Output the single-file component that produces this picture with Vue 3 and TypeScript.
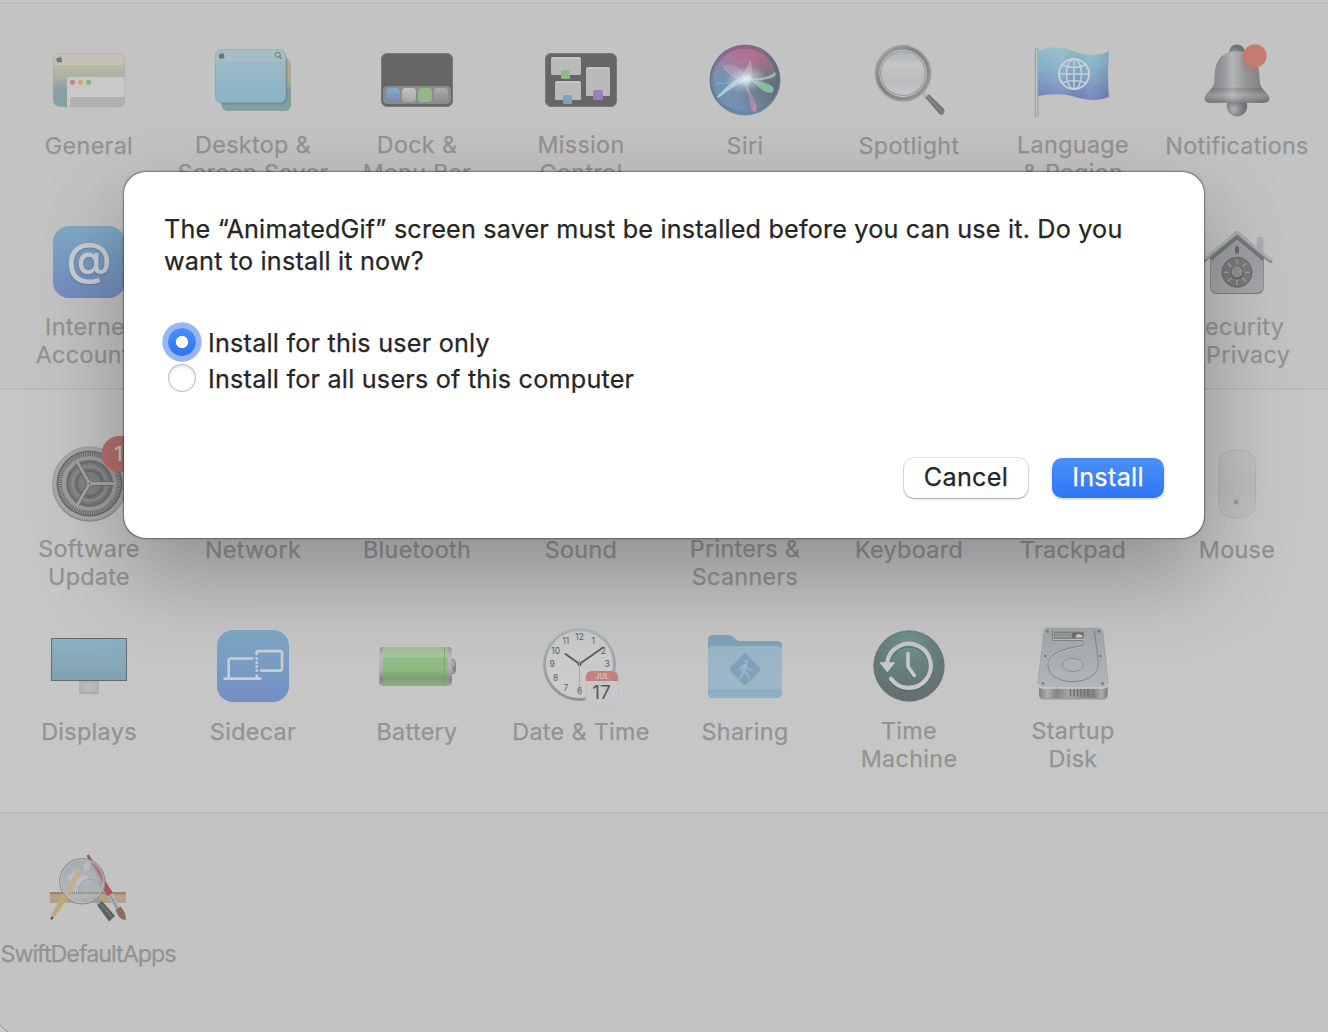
<script setup lang="ts">
import { ref } from 'vue'

interface Pane {
  icon: string
  lines: string[]
  column?: number
  tight?: boolean
}

const personal: Pane[] = [
  { icon: 'general', lines: ['General'] },
  { icon: 'desktop', lines: ['Desktop &', 'Screen Saver'] },
  { icon: 'dock', lines: ['Dock &', 'Menu Bar'] },
  { icon: 'mission', lines: ['Mission', 'Control'] },
  { icon: 'siri', lines: ['Siri'] },
  { icon: 'spotlight', lines: ['Spotlight'] },
  { icon: 'language', lines: ['Language', '& Region'] },
  { icon: 'notifications', lines: ['Notifications'] },
  { icon: 'internet', lines: ['Internet', 'Accounts'] },
  { icon: 'security', lines: ['Security', '& Privacy'], column: 8 },
]
const hardware: Pane[] = [
  { icon: 'update', lines: ['Software', 'Update'] },
  { icon: 'none', lines: ['Network'] },
  { icon: 'none', lines: ['Bluetooth'] },
  { icon: 'none', lines: ['Sound'] },
  { icon: 'none', lines: ['Printers &', 'Scanners'] },
  { icon: 'none', lines: ['Keyboard'] },
  { icon: 'none', lines: ['Trackpad'] },
  { icon: 'mouse', lines: ['Mouse'] },
  { icon: 'displays', lines: ['Displays'] },
  { icon: 'sidecar', lines: ['Sidecar'] },
  { icon: 'battery', lines: ['Battery'] },
  { icon: 'clock', lines: ['Date & Time'] },
  { icon: 'sharing', lines: ['Sharing'] },
  { icon: 'timemachine', lines: ['Time', 'Machine'] },
  { icon: 'disk', lines: ['Startup', 'Disk'] },
]
const custom: Pane[] = [{ icon: 'swift', lines: ['SwiftDefaultApps'], tight: true }]

const sections = [
  { id: 'personal', panes: personal },
  { id: 'hardware', panes: hardware },
  { id: 'custom', panes: custom },
]

const choice = ref('user')
const choices = [
  { id: 'user', text: 'Install for this user only' },
  { id: 'all', text: 'Install for all users of this computer' },
]

// The calendar badge covers 4 and 5 on the clock face.
const numerals = [1, 2, 3, 6, 7, 8, 9, 10, 11, 12].map((n) => {
  const a = (n * Math.PI) / 6
  return { n, x: 38.5 + 27.5 * Math.sin(a), y: 41.4 - 27 * Math.cos(a) }
})
const dialAngles = [0, 45, 90, 135, 180, 225, 270, 315]
const apple =
  'M4.6 1.7C4.5 .8 5.100 .1 5.900 0C6 .9 5.400 1.600 4.600 1.700ZM6 2.100C5.400 2.100 5 2.400 4.600 2.400C4.100 2.400 3.600 2 2.900 2C1.500 2 .3 3.100 .3 4.900C.3 6.700 1.600 8.500 2.600 8.500C3.200 8.500 3.500 8.200 4.200 8.200C4.900 8.200 5.200 8.500 5.800 8.500C6.700 8.500 7.500 7.300 7.700 6.500C6.300 5.900 6.200 3.900 7.500 3.100C7.100 2.500 6.600 2.100 6 2.100Z'
</script>

<template>
  <main class="screen">
    <section v-for="s in sections" :key="s.id" class="group" :class="s.id">
      <div
        v-for="p in s.panes"
        :key="p.lines[0]"
        class="pane"
        :class="{ last: p.column === 8 }"
      >
        <svg class="icon" viewBox="0 0 80 80" width="80" height="80" aria-hidden="true">
          <g v-if="p.icon === 'general'">
            <defs>
              <linearGradient id="g-gen" x1="0" y1="0" x2="0" y2="1">
                <stop offset=".2" stop-color="#b9b8a0" /><stop offset=".42" stop-color="#aeb3a6" />
                <stop offset=".68" stop-color="#8b9bab" /><stop offset=".95" stop-color="#83a3a0" />
              </linearGradient>
              <clipPath id="g-genclip"><rect x="4" y="13" width="72" height="54" rx="7" /></clipPath>
            </defs>
            <g clip-path="url(#g-genclip)">
              <rect x="4" y="13" width="72" height="54" fill="url(#g-gen)" />
              <rect x="4" y="13" width="72" height="12" fill="#c5c1b6" />
              <path d="M18 67V40a3 3 0 0 1 3-3H76V67Z" fill="#c9c9c9" />
              <path d="M21 67V59a2 2 0 0 1 2-2H76V67Z" fill="#b1b1b1" />
            </g>
            <rect x="4.300" y="13.300" width="71.400" height="53.400" rx="6.700" fill="none" stroke="#aaa" stroke-width=".6" />
            <path :d="apple" transform="translate(7.200 15.800) scale(.8)" fill="#727272" />
            <circle cx="23.500" cy="42.300" r="2.600" fill="#c98784" />
            <circle cx="31.500" cy="42.300" r="2.600" fill="#c8ad78" />
            <circle cx="39.500" cy="42.300" r="2.600" fill="#89b284" />
          </g>

          <g v-else-if="p.icon === 'desktop'">
            <defs>
              <linearGradient id="g-dskb" x1="0" y1="0" x2="0" y2="1">
                <stop offset="0" stop-color="#b7ab95" /><stop offset=".42" stop-color="#a9a797" />
                <stop offset=".65" stop-color="#84979f" /><stop offset="1" stop-color="#82a39d" />
              </linearGradient>
              <linearGradient id="g-dskf" x1="0" y1="0" x2="0" y2="1">
                <stop offset=".2" stop-color="#9cbac3" /><stop offset="1" stop-color="#8ab2c9" />
              </linearGradient>
            </defs>
            <rect x="8.500" y="18" width="69.500" height="53" rx="6" fill="url(#g-dskb)" />
            <rect x="4" y="13" width="70.500" height="51.500" rx="7" fill="#56707a" opacity=".4" />
            <rect x="2" y="9.500" width="71" height="53.300" rx="6.500" fill="url(#g-dskf)" />
            <path d="M2 21V16a6.500 6.500 0 0 1 6.500-6.500H66.500A6.500 6.500 0 0 1 73 16V21Z" fill="#a8bec5" />
            <rect x="2.400" y="9.900" width="70.200" height="52.400" rx="6.200" fill="none" stroke="#86a3ae" stroke-width=".6" />
            <path :d="apple" transform="translate(5.500 12) scale(.8)" fill="#6c7476" />
            <circle cx="64.800" cy="14.800" r="2.500" fill="none" stroke="#6c7476" />
            <path d="m66.500 16.600 2.300 2.300" stroke="#6c7476" stroke-width="1.200" />
          </g>

          <g v-else-if="p.icon === 'dock'">
            <defs>
              <linearGradient id="g-blu" x1="0" y1="0" x2="0" y2="1"><stop stop-color="#83aec2" /><stop offset="1" stop-color="#7589ba" /></linearGradient>
              <linearGradient id="g-gry" x1="0" y1="0" x2="0" y2="1"><stop stop-color="#c4c4c4" /><stop offset="1" stop-color="#a5a5a5" /></linearGradient>
              <linearGradient id="g-dgr" x1="0" y1="0" x2="0" y2="1"><stop stop-color="#a9adb0" /><stop offset="1" stop-color="#8b8e8f" /></linearGradient>
            </defs>
            <rect x="4.500" y="13.500" width="71" height="53" rx="5.500" fill="#666" stroke="#777" />
            <rect x="6" y="46" width="68" height="18" rx="4.500" fill="#8b8b8b" />
            <rect x="9" y="48" width="14" height="14" rx="3.500" fill="url(#g-blu)" />
            <rect x="25" y="48" width="14" height="14" rx="3.500" fill="url(#g-gry)" />
            <rect x="41" y="48" width="14" height="14" rx="3.500" fill="#90b988" />
            <rect x="57" y="48" width="14" height="14" rx="3.500" fill="url(#g-dgr)" />
          </g>

          <g v-else-if="p.icon === 'mission'">
            <rect x="4.500" y="13.500" width="71" height="53" rx="5.500" fill="#666" stroke="#777" />
            <rect x="10" y="17" width="30" height="18" rx="1.500" fill="#bababa" />
            <rect x="14" y="41" width="26" height="19" rx="1.500" fill="#bababa" />
            <rect x="45" y="27" width="24" height="29" rx="1.500" fill="#bababa" />
            <path d="M11 18.200h28M15 42.200h24M46 28.200h22" stroke="#c6c6c6" stroke-width="2" />
            <rect x="20" y="30" width="9" height="9" rx="1.500" fill="#8fb987" />
            <rect x="22" y="55" width="9" height="9" rx="1.500" fill="#7da0c3" />
            <rect x="52" y="50" width="10" height="10" rx="1.500" fill="#9a83b3" />
          </g>

          <g v-else-if="p.icon === 'siri'">
            <defs>
              <linearGradient id="g-sr" x1=".6" y1="0" x2=".35" y2="1">
                <stop offset="0" stop-color="#b56c89" /><stop offset=".3" stop-color="#a97c9a" />
                <stop offset=".55" stop-color="#8a90a8" /><stop offset="1" stop-color="#6c8db5" />
              </linearGradient>
              <linearGradient id="g-srim" x1=".3" y1="0" x2=".6" y2="1">
                <stop stop-color="#8d6790" /><stop offset=".5" stop-color="#6a6d82" /><stop offset="1" stop-color="#6e8bab" />
              </linearGradient>
              <radialGradient id="g-sdk" cx=".92" cy=".6" r=".55">
                <stop stop-color="#566a6e" stop-opacity=".85" /><stop offset="1" stop-color="#566a6e" stop-opacity="0" />
              </radialGradient>
              <radialGradient id="g-sle" cx=".1" cy=".55" r=".5">
                <stop stop-color="#6c96b4" stop-opacity=".85" /><stop offset="1" stop-color="#6c96b4" stop-opacity="0" />
              </radialGradient>
              <radialGradient id="g-sgl"><stop stop-color="#dff1f1" /><stop offset=".35" stop-color="#cfe2e5" stop-opacity=".6" /><stop offset="1" stop-color="#c0d8de" stop-opacity="0" /></radialGradient>
              <linearGradient id="g-spk" x1="0" y1="0" x2="0" y2="1"><stop stop-color="#d9d3df" stop-opacity=".9" /><stop offset=".5" stop-color="#b98fb5" stop-opacity=".6" /><stop offset="1" stop-color="#bd88ae" /></linearGradient>
            </defs>
            <circle cx="40" cy="40" r="35.500" fill="url(#g-srim)" />
            <circle cx="40" cy="40" r="31.500" fill="url(#g-sr)" />
            <circle cx="40" cy="40" r="34" fill="url(#g-sle)" />
            <circle cx="40" cy="40" r="34" fill="url(#g-sdk)" />
            <path d="M18 26C30 22 41 31 46 44C35 42 24 37 18 26Z" fill="#d5a8c8" opacity=".4" />
            <path d="M33 44L45.500 20C48.500 28 46 38 44 46Z" fill="#dcb9d2" opacity=".45" />
            <path d="M44 38.500C55 39 64 37 70 32C73 37 65 39.500 52 40.500Z" fill="#9acbbd" opacity=".8" />
            <path d="M46 40C54 41 64 43 68 47C70 52 66 54 61 52C55 49 50 44 46 40Z" fill="#8fc0ab" opacity=".9" />
            <path d="M39 39C42 47 46 53 49 59C52 65 53 70 50 72C46 73 46 64 44 58C42 50 40 45 39 39Z" fill="url(#g-spk)" />
            <path d="M12 56.500C23 46 31 35.500 45 34.500L49 40.500C34 41 26 49 13 58Z" fill="#c0e1e4" opacity=".75" />
            <path d="M11 43C22 45 31 42 40 39M18 26C22 34 31 38 41 39" fill="none" stroke="#a9cbd8" opacity=".6" stroke-width=".8" />
            <ellipse cx="41" cy="39" rx="21" ry="13" fill="url(#g-sgl)" transform="rotate(-10 41 39)" />
          </g>

          <g v-else-if="p.icon === 'spotlight'">
            <defs>
              <linearGradient id="g-sprim" x1="0" y1="0" x2="1" y2="1"><stop stop-color="#a3a3a3" /><stop offset=".4" stop-color="#808080" /><stop offset="1" stop-color="#969696" /></linearGradient>
              <linearGradient id="g-spg" x1="0" y1="0" x2="0" y2="1"><stop stop-color="#aeb2b7" /><stop offset=".3" stop-color="#c2c4c5" /><stop offset=".7" stop-color="#babcbd" /><stop offset="1" stop-color="#c6c8cc" /></linearGradient>
              <linearGradient id="g-sph" x1="1" y1="0" x2="0" y2="1"><stop offset=".3" stop-color="#5f5f5f" /><stop offset=".5" stop-color="#858585" /><stop offset=".7" stop-color="#555" /></linearGradient>
            </defs>
            <path d="M52 51l7 7" stroke="#b8b4ae" stroke-width="4" />
            <path d="M56.300 57.500L69.800 73.300Q72.500 76 75 73.500Q76.500 71 74.500 68.500L60 54.200Z" fill="url(#g-sph)" />
            <circle cx="34" cy="33.300" r="28" fill="#acacac" stroke="#929292" stroke-width=".7" />
            <circle cx="34" cy="33.300" r="24.800" fill="none" stroke="url(#g-sprim)" stroke-width="4.500" />
            <circle cx="34" cy="33.300" r="23.200" fill="none" stroke="#c6c6c6" stroke-width="1" />
            <circle cx="34" cy="33.300" r="22" fill="url(#g-spg)" stroke="#999fa4" stroke-width=".9" />
          </g>

          <g v-else-if="p.icon === 'language'">
            <defs>
              <linearGradient id="g-flg" x1="0" y1="0" x2=".04" y2="1"><stop stop-color="#8dbdc9" /><stop offset=".35" stop-color="#85b1c5" /><stop offset="1" stop-color="#7180ba" /></linearGradient>
              <linearGradient id="g-fls"><stop stop-color="#fff" stop-opacity="0" /><stop offset=".35" stop-color="#fff" stop-opacity=".1" /><stop offset=".55" stop-color="#334" stop-opacity=".02" /><stop offset=".72" stop-color="#fff" stop-opacity=".08" /><stop offset="1" stop-color="#335" stop-opacity=".12" /></linearGradient>
            </defs>
            <rect x="2.300" y="8.500" width="2.600" height="68" rx="1.300" fill="#c4c4c4" stroke="#8f8f8f" stroke-width=".8" />
            <path d="M5 11C14 7 25 5.500 37 10C50 15 61 17.500 76 11.500Q74 35 76 57C65 61 54 61 41 56.500C29 53 17 54 5 56Z" fill="url(#g-flg)" />
            <path d="M5 11C14 7 25 5.500 37 10C50 15 61 17.500 76 11.500Q74 35 76 57C65 61 54 61 41 56.500C29 53 17 54 5 56Z" fill="url(#g-fls)" />
            <g fill="none" stroke="#c8d0d7" stroke-width="1.500">
              <circle cx="41" cy="34" r="15" stroke-width="2" />
              <ellipse cx="41" cy="34" rx="7.500" ry="15" />
              <path d="M41 19v30M26 34h30M29.500 25q11.500 5 23 0M29.500 43q11.500-5 23 0" />
            </g>
          </g>

          <g v-else-if="p.icon === 'notifications'">
            <defs>
              <linearGradient id="g-bel"><stop stop-color="#7b7d7f" /><stop offset=".27" stop-color="#929597" /><stop offset=".43" stop-color="#b3b5b7" /><stop offset=".62" stop-color="#959799" /><stop offset="1" stop-color="#747678" /></linearGradient>
              <radialGradient id="g-clp" cx=".35" cy=".65"><stop stop-color="#b0b2b4" /><stop offset="1" stop-color="#6f7274" /></radialGradient>
              <linearGradient id="g-bsh" x1="0" y1="0" x2="0" y2="1"><stop offset=".67" stop-color="#fff" stop-opacity="0" /><stop offset=".72" stop-color="#555" stop-opacity=".25" /><stop offset=".85" stop-color="#ccc" stop-opacity=".24" /><stop offset="1" stop-color="#555" stop-opacity=".5" /></linearGradient>
              <radialGradient id="g-bred"><stop offset=".6" stop-color="#b86a62" stop-opacity=".7" /><stop offset="1" stop-color="#b86a62" stop-opacity="0" /></radialGradient>
            </defs>
            <circle cx="40" cy="12.500" r="8" fill="url(#g-clp)" />
            <circle cx="40" cy="66" r="10.400" fill="url(#g-clp)" />
            <path d="M31 12.500Q40 10 49 12.500C58 16 61 23 62 31L63 43C64 50 72 53 72.500 58Q72.500 62.500 67 62.700H13Q7.500 62.500 7.500 58C8 53 16 50 17 43L18 31C19 23 22 16 31 12.500Z" fill="url(#g-bel)" />
            <path d="M31 12.500Q40 10 49 12.500C58 16 61 23 62 31L63 43C64 50 72 53 72.500 58Q72.500 62.500 67 62.700H13Q7.500 62.500 7.500 58C8 53 16 50 17 43L18 31C19 23 22 16 31 12.500Z" fill="url(#g-bsh)" />
            <ellipse cx="54" cy="20" rx="12" ry="14" fill="url(#g-bred)" opacity=".5" />
            <circle cx="58" cy="15.800" r="11.600" fill="#c57b71" />
          </g>

          <g v-else-if="p.icon === 'internet'">
            <defs><linearGradient id="g-int" x1="0" y1="0" x2="0" y2="1"><stop stop-color="#7fabc3" /><stop offset="1" stop-color="#738bc0" /></linearGradient></defs>
            <rect x="4" y="4" width="72" height="72" rx="16" fill="url(#g-int)" />
            <text x="40" y="53" text-anchor="middle" class="at">@</text>
          </g>

          <g v-else-if="p.icon === 'security'">
            <defs><linearGradient id="g-hs" x1="0" y1="0" x2="0" y2="1"><stop stop-color="#999c9e" /><stop offset="1" stop-color="#a5a8a9" /></linearGradient></defs>
            <rect x="60" y="15" width="6.500" height="24" rx="1.500" fill="#a9adaf" />
            <path d="M13.500 33L40 12L66.500 33V65Q66.500 71.500 60 71.500H20Q13.500 71.500 13.500 65Z" fill="url(#g-hs)" stroke="#858788" stroke-width=".8" />
            <path d="M14 68Q16 71.500 21 71.500H59Q64 71.500 66 68" fill="none" stroke="#7c7e7f" />
            <path d="M13.500 37L40 15L66.500 37" fill="none" stroke="#747778" stroke-width="4" />
            <path d="M6.500 39L40 11L73.500 39" fill="none" stroke="#838688" stroke-width="3.800" stroke-linejoin="round" stroke-linecap="round" />
            <path d="M6.500 37.800L40 10.400L73.500 37.800" fill="none" stroke="#adb0b2" stroke-width="2.600" stroke-linejoin="round" stroke-linecap="round" />
            <rect x="38" y="24" width="4" height="8" rx="2" fill="#6a6a6a" />
            <circle cx="40" cy="50.300" r="15" fill="#797b7c" stroke="#686a6b" />
            <path v-for="a in dialAngles" :key="a" d="M40 37.500v5" :transform="`rotate(${a} 40 50.300)`" stroke="#a6a8a9" stroke-width="1.200" />
            <circle cx="40" cy="50.800" r="6.300" fill="#636566" />
            <circle cx="40" cy="50" r="5" fill="#8f9192" stroke="#a8aaab" stroke-width=".7" />
          </g>

          <g v-else-if="p.icon === 'update'">
            <circle cx="40.500" cy="40.500" r="37.300" fill="#8c8d8d" />
            <circle cx="40.500" cy="39.500" r="36.800" fill="#a7aaaa" stroke="#989b9b" stroke-width=".7" />
            <circle cx="40.500" cy="39.500" r="33" fill="#6c6e6e" />
            <circle cx="40.500" cy="39.500" r="29.500" fill="none" stroke="#9a9d9d" stroke-width="3.600" stroke-dasharray="1.150 1.150" />
            <circle cx="40.500" cy="39.500" r="25.500" fill="#717373" stroke="#9d a0a0" stroke-width="4.200" />
            <circle cx="40.500" cy="39.500" r="25.500" fill="none" stroke="#9da0a0" stroke-width="4.200" />
            <circle cx="40.500" cy="39.500" r="19.500" fill="none" stroke="#8d9090" stroke-width="2" stroke-dasharray=".9 .9" />
            <circle cx="40.500" cy="39.500" r="17" fill="#777a7a" stroke="#8d9090" stroke-width="2.600" />
            <circle cx="40.500" cy="39.500" r="12.500" fill="#818484" stroke="#6c6e6e" stroke-width="2" />
            <path d="M40.500 39.500H65M40.500 39.500L28.500 18.500M40.500 39.500L28.500 60.500" stroke="#6c6e6e" stroke-width="4.600" />
            <path d="M40.500 39.500H66M40.500 39.500L28 17.500M40.500 39.500L28 61.500" stroke="#a5a8a8" stroke-width="2.800" />
            <circle cx="40.500" cy="39.500" r="2.700" fill="#a5a8a8" /><circle cx="40.500" cy="39.500" r="1" fill="#6a6a6a" />
            <circle cx="70.500" cy="10" r="18" fill="#b5716d" />
            <text x="69.500" y="17.200" text-anchor="middle" class="badge">1</text>
          </g>

          <g v-else-if="p.icon === 'mouse'">
            <defs><linearGradient id="g-mou" x1="0" y1="0" x2="0" y2="1"><stop stop-color="#c1c1c1" /><stop offset=".6" stop-color="#bdbdbd" /><stop offset="1" stop-color="#c2c2c2" /></linearGradient></defs>
            <path d="M22 24C22 10 26 6.300 40 6.300C54 6.300 58.500 10 58.500 24V54C58.500 69 54 73.500 40 73.500C26 73.500 22 69 22 54Z" fill="url(#g-mou)" stroke="#aeaeae" stroke-width=".8" />
            <path :d="apple" transform="translate(36.300 54.500) scale(.7)" fill="#9c9c9c" />
          </g>

          <g v-else-if="p.icon === 'displays'">
            <defs>
              <linearGradient id="g-dis" x1="0" y1="0" x2="0" y2="1"><stop stop-color="#89b1c4" /><stop offset="1" stop-color="#84a1ae" /></linearGradient>
              <radialGradient id="g-std"><stop stop-color="#bdbdbd" /><stop offset="1" stop-color="#b0b1b2" /></radialGradient>
            </defs>
            <rect x="30" y="55" width="20" height="13" fill="url(#g-std)" />
            <path d="M31 66.500h18M31 67.700h18" stroke="#aaa" stroke-width=".6" />
            <rect x="2.500" y="12.500" width="75" height="42" fill="url(#g-dis)" stroke="#646a6d" />
          </g>

          <g v-else-if="p.icon === 'sidecar'">
            <defs><linearGradient id="g-sid" x1="0" y1="0" x2="0" y2="1"><stop stop-color="#7faac4" /><stop offset="1" stop-color="#748dc5" /></linearGradient></defs>
            <rect x="4" y="4" width="72" height="72" rx="16" fill="url(#g-sid)" />
            <g fill="none" stroke="#c9ced4" stroke-width="2.700" stroke-linecap="round" stroke-linejoin="round">
              <path d="M11.500 52.600H47.500M15.700 52V34.700Q15.700 32.500 17.900 32.500H39.300M43.700 28V27Q43.700 25.200 45.500 25.200H67Q69 25.200 69 27.200V42.500Q69 44.600 67 44.600H48M43.700 49.500V52" />
              <path d="M43.700 32.500V46" stroke-dasharray="0 4" stroke-width="3" />
            </g>
          </g>

          <g v-else-if="p.icon === 'battery'">
            <defs>
              <linearGradient id="g-bat" x1="0" y1="0" x2="0" y2="1"><stop stop-color="#9ebd99" /><stop offset=".25" stop-color="#a9c5a3" /><stop offset=".3" stop-color="#8fbd82" /><stop offset=".55" stop-color="#8fbc82" /><stop offset=".8" stop-color="#7e9e76" /><stop offset="1" stop-color="#8aae80" /></linearGradient>
              <linearGradient id="g-cap" x1="0" y1="0" x2="0" y2="1"><stop stop-color="#9a9a9a" /><stop offset=".25" stop-color="#bcbcbc" /><stop offset=".6" stop-color="#aeaeae" /><stop offset=".85" stop-color="#858585" /><stop offset="1" stop-color="#a2a2a2" /></linearGradient>
            </defs>
            <path d="M75 33.500H77Q78.500 34.500 78.500 40.500Q78.500 46.500 77 47.500H75Z" fill="#b0b0b0" stroke="#808080" />
            <path d="M76 40h2.500v5.500H76Z" fill="#858585" />
            <rect x="2.300" y="21" width="72.700" height="38.700" rx="3.500" fill="url(#g-cap)" />
            <rect x="6" y="21" width="64.700" height="38.700" fill="url(#g-bat)" />
            <path d="M67.500 21v38.700" stroke="#7a9c71" stroke-width=".7" />
          </g>

          <g v-else-if="p.icon === 'clock'">
            <defs><linearGradient id="g-clk" x1="0" y1="0" x2="0" y2="1"><stop stop-color="#abb7bc" /><stop offset="1" stop-color="#8f9393" /></linearGradient></defs>
            <circle cx="38.500" cy="38.500" r="35" fill="#cbcbcb" stroke="url(#g-clk)" stroke-width="2.900" />
            <g class="numerals" text-anchor="middle">
              <text v-for="m in numerals" :key="m.n" :x="m.x" :y="m.y">{{ m.n }}</text>
            </g>
            <path d="M38.500 38L24.500 28" stroke="#5d5d5d" stroke-width="2" stroke-linecap="round" />
            <path d="M38.500 38L62 21.500" stroke="#5d5d5d" stroke-width="2" stroke-linecap="round" />
            <circle cx="38.500" cy="38.300" r="2" fill="#666" />
            <path d="M38.500 33V69.500" stroke="#c19d62" stroke-width=".9" />
            <rect x="44.800" y="45" width="32.400" height="33" rx="5.500" fill="#c8c8c8" stroke="#b8b8b8" stroke-width=".5" />
            <path d="M45 55V51Q45 45 51 45H71Q77 45 77 51V55Z" fill="#c1827e" />
            <text x="61.300" y="53" text-anchor="middle" class="month">JUL</text>
            <text x="60.600" y="73" text-anchor="middle" class="day">17</text>
          </g>

          <g v-else-if="p.icon === 'sharing'">
            <path d="M3 30V14Q3 9 8 9H23Q26 9 28 10.700L31 13.500Q32.700 15 35 15H72Q77 15 77 20V30Z" fill="#7fa2bb" />
            <path d="M3 25Q3 20 8 20H72Q77 20 77 25V67Q77 72 72 72H8Q3 72 3 67Z" fill="#9ab6c7" />
            <path d="M3 64H77V67Q77 72 72 72H8Q3 72 3 67Z" fill="#8fb0c4" />
            <path d="M3 64h74M3 66h74" stroke="#85a8bc" stroke-width=".5" />
            <rect x="28.400" y="31.700" width="23.200" height="23.200" rx="2.500" fill="#7fa1bb" transform="rotate(45 40 43.300)" />
            <circle cx="41.300" cy="35.600" r="2" fill="#9ab6c7" />
            <path d="M35 43.500L37 40L40.500 39L43 42.500L46.500 43.800M40 39.500L38.500 45L42.500 48L44 52M38.500 45.500L37.500 48.500L34.500 52" fill="none" stroke="#9ab6c7" stroke-width="1.800" stroke-linecap="round" stroke-linejoin="round" />
            <path d="M40 39.500L39 45" stroke="#9ab6c7" stroke-width="3.500" stroke-linecap="round" />
          </g>

          <g v-else-if="p.icon === 'timemachine'">
            <defs><radialGradient id="g-tm" cx=".5" cy=".18" r=".85"><stop stop-color="#73948f" /><stop offset=".5" stop-color="#657e7b" /><stop offset="1" stop-color="#676c6d" /></radialGradient></defs>
            <circle cx="40" cy="40" r="35.300" fill="url(#g-tm)" stroke="#5c6b69" stroke-width=".6" />
            <g fill="none" stroke="#415b58" stroke-opacity=".4" stroke-linecap="round" stroke-linejoin="round" transform="translate(0 1.300)">
              <path d="M18.200 36A22 22 0 1 1 22 52.700" stroke-width="4.700" />
              <path d="M39 27.500V40.500L45.200 49.500" stroke-width="4" />
            </g>
            <g fill="none" stroke="#c8c8c8" stroke-linecap="round" stroke-linejoin="round">
              <path d="M18.200 36A22 22 0 1 1 22 52.700" stroke-width="4.200" />
              <path d="M39 27.500V40.500L45.200 49.500" stroke-width="3.700" />
              <path d="M11.500 36.800H25.200L18.300 45.500Z" fill="#c8c8c8" stroke-width="1.200" />
            </g>
          </g>

          <g v-else-if="p.icon === 'disk'">
            <defs>
              <linearGradient id="g-hdd" x1="0" y1="0" x2="0" y2="1"><stop stop-color="#a3a7a9" /><stop offset="1" stop-color="#b1b6b9" /></linearGradient>
              <linearGradient id="g-hdb"><stop stop-color="#808080" /><stop offset=".13" stop-color="#b0b0b0" /><stop offset=".25" stop-color="#858585" /><stop offset=".45" stop-color="#a7a7a7" /><stop offset=".8" stop-color="#7f7f7f" /><stop offset=".91" stop-color="#adadad" /><stop offset="1" stop-color="#7b7b7b" /></linearGradient>
            </defs>
            <path d="M6 60V69Q6 73.500 11 73.500H70Q74.500 73.500 74.500 69V60Z" fill="#9a9a9a" />
            <path d="M6 60V68Q6 72 11 72H70Q74.500 72 74.500 68V60Z" fill="url(#g-hdb)" />
            <path d="M37.500 63v7.500M41 63v7.500M44.500 63v7.500M48 63v7.500M51.500 63v7.500M55 63v7.500" stroke="#6c6c6c" stroke-width="1.400" />
            <path d="M15 2.200H65.500Q69.500 2.200 70 6.500L75 56Q75.500 62 71 62H9.500Q4.500 62 5.200 56L10.500 6.500Q11 2.200 15 2.200Z" fill="url(#g-hdd)" stroke="#989da0" stroke-width=".7" />
            <path d="M6 58Q6 62 10 62H70.500Q74.500 62 74.500 58" fill="none" stroke="#c5caca" stroke-width="1.300" />
            <path d="M19.500 4.500V14.500H50.500M51 15V19C38 22 15 25 15 39C15 50 27 56 41 55.500C56 55 66 47 65.300 36L61.500 4.500" fill="none" stroke="#7b8082" stroke-width=".9" />
            <path d="M20.500 5V13.500H51.800V20C39 23 16 26 16 39" fill="none" stroke="#c2c6c8" stroke-width=".6" />
            <ellipse cx="40" cy="39" rx="10.500" ry="6.500" fill="#b0b4b7" stroke="#7e8284" stroke-width=".7" />
            <rect x="21" y="6" width="29.500" height="6.500" fill="#8c8f90" stroke="#747778" stroke-width=".5" />
            <path d="M22 8h17M22 10.500h15" stroke="#a9acae" stroke-width="1" stroke-dasharray="2 .6" />
            <rect x="39" y="6.500" width="11" height="5.500" fill="#6c6e6f" /><path d="M42.500 11.500q0-3 3.500-3.500q3.500 .5 3.500 3.500Z" fill="#d0d0d0" />
            <g fill="#707476"><circle cx="14.500" cy="5.500" r="1.200" /><circle cx="66" cy="5.500" r="1.200" /><circle cx="12.200" cy="30" r="1.200" /><circle cx="67.500" cy="30" r="1.200" /><circle cx="10" cy="57.500" r="1.300" /><circle cx="69.500" cy="57.500" r="1.300" /></g>
          </g>

          <g v-else-if="p.icon === 'swift'">
            <defs>
              <linearGradient id="g-rul" x1="0" y1="0" x2="0" y2="1"><stop stop-color="#9b8c74" /><stop offset=".4" stop-color="#b9a68a" /><stop offset="1" stop-color="#ae9b80" /></linearGradient>
              <radialGradient id="g-lens" cx=".5" cy=".75" r=".8"><stop stop-color="#b9bbbc" stop-opacity=".8" /><stop offset="1" stop-color="#9ea5af" stop-opacity=".9" /></radialGradient>
            </defs>
            <rect x=".7" y="44" width="76.300" height="10.800" fill="url(#g-rul)" />
            <path d="M1 45.300h76" stroke="#77705f" stroke-width="1.600" stroke-dasharray=".8 1.600" />
            <path d="M37.500 7.500L40 6.500L64 45L59 48.500Q50 36 46 25Z" fill="#a65759" />
            <path d="M58.500 48L64 45L71 59.500L67 62Z" fill="#b3b3b3" /><path d="M61 47L68.700 61" stroke="#777" />
            <path d="M66.500 62L71.500 58.500Q77 64 77 72Q70 72 66.500 62Z" fill="#896d5d" />
            <circle cx="33.300" cy="33.300" r="22.600" fill="url(#g-lens)" />
            <path d="M42 13Q48 24 54 35Q56 31 55 26Q50 18 42 13Z" fill="#a8707b" opacity=".8" />
            <path d="M18 28l5-2 3-5 5 4-2 5 5 2-5 5-7-1Z M34 16l7-3-1 9h-5Z M31 29l8-2-1 4 4 2-3 4-7-1Z" fill="#c4c6c8" opacity=".6" />
            <circle cx="41" cy="42.500" r="11.500" fill="#a8aeb3" stroke="#8d9398" stroke-width=".9" opacity=".65" />
            <path d="M12 46h43q-4 4-11 4H16Z" fill="#bab5aa" opacity=".75" />
            <path d="M15 45h38" stroke="#8a8b89" stroke-width="1.800" stroke-dasharray="1 1" />
            <path d="M28 20L33 23L18 51L14 49Z" fill="#bfb18e" />
            <path d="M13 48L18 51L5.500 69L2 72L2.500 67Z" fill="#c0a970" /><path d="M1.500 72.500l.7-4 2.500 1.300Z" fill="#4f4a42" />
            <circle cx="33.300" cy="33.300" r="22.600" fill="none" stroke="#8e9091" stroke-width="1.200" />
            <circle cx="33.300" cy="33.300" r="21.500" fill="none" stroke="#c4c4c4" stroke-width=".7" />
            <path d="M46 50l4 5" stroke="#999" stroke-width="4" />
            <path d="M48 57L53 53L66 68L60 73.500Z" fill="#5f6160" /><path d="M52 56L63 69" stroke="#777977" stroke-width="1.500" />
          </g>
        </svg>
        <div class="label" :class="{ single: p.lines.length === 1, tight: p.tight }">
          <span v-for="l in p.lines" :key="l">{{ l }}</span>
        </div>
      </div>
    </section>

    <svg class="corner" width="9" height="9" viewBox="0 0 9 9" aria-hidden="true">
      <path d="M0 2Q3 6.500 8 9H0Z" fill="#cfcccc" />
      <path d="M0 2Q3 6.500 8 9" fill="none" stroke="#969393" />
    </svg>

    <div class="dialog" role="dialog" aria-modal="true">
      <p class="message">
        <span>The “AnimatedGif” screen saver must be installed before you can use it. Do you</span>
        <span>want to install it now?</span>
      </p>
      <div class="choices" role="radiogroup">
        <label v-for="c in choices" :key="c.id" class="choice">
          <input v-model="choice" type="radio" name="scope" :value="c.id" />
          <span>{{ c.text }}</span>
        </label>
      </div>
      <div class="actions">
        <button type="button" class="cancel">Cancel</button>
        <button type="button" class="install">Install</button>
      </div>
    </div>
  </main>
</template>

<style>
body {
  background: #c4c4c4;
}
</style>

<style scoped>
.screen {
  position: relative;
  display: flex;
  flex-direction: column;
  box-sizing: border-box;
  width: 1328px;
  height: 1032px;
  padding-top: 2px;
  overflow: hidden;
  background: #c5c5c5;
  font-family: Inter, "Liberation Sans", sans-serif;
}
.group {
  display: grid;
  grid-template-columns: repeat(8, 164px);
  grid-auto-rows: 182px;
  box-sizing: border-box;
  padding: 36px 9px 0 7px;
  border-top: 2px solid #b9b9b9;
}
.personal {
  height: 386px;
  background: #c3c3c3;
}
.hardware {
  height: 424px;
  padding-top: 54px;
  background: #c6c6c6;
}
.custom {
  flex: 1;
  padding-top: 34px;
  background: #c3c3c3;
}
.pane {
  display: flex;
  flex-direction: column;
  align-items: center;
}
.pane.last {
  grid-column: 8;
}
.icon {
  flex: none;
  display: block;
  overflow: visible;
}
.label {
  display: flex;
  flex-direction: column;
  align-items: center;
  margin-top: 11px;
  color: #939393;
  font-size: 23.3px;
  line-height: 28px;
  letter-spacing: 0.35px;
  white-space: nowrap;
  -webkit-text-stroke: 0.25px #939393;
}
.label.single {
  margin-top: 12px;
}
.label.tight {
  letter-spacing: -1px;
  margin-left: -2px;
}
.at {
  font-size: 45px;
  font-weight: 600;
  fill: #cbcfd4;
  filter: drop-shadow(0 1px 1px rgba(70, 90, 130, 0.45));
}
.badge {
  font-size: 20px;
  font-weight: 500;
  fill: #cfc5c4;
}
.numerals {
  font-size: 8.4px;
  fill: #5e5e5e;
}
.month {
  font-size: 7.5px;
  font-weight: 600;
  fill: #d0c4c3;
}
.day {
  font-size: 19px;
  fill: #5a5a5a;
}
.corner {
  position: absolute;
  left: 0;
  bottom: 0;
}
.dialog {
  position: absolute;
  left: 124px;
  top: 172px;
  display: flex;
  flex-direction: column;
  box-sizing: border-box;
  width: 1080px;
  height: 366px;
  padding: 41px 40px 40px;
  border-radius: 22px;
  background: #fff;
  color: #262626;
  font-size: 25.2px;
  letter-spacing: 0.18px;
  -webkit-text-stroke: 0.25px currentColor;
  box-shadow: 0 0 1.5px 0.5px rgba(0, 0, 0, 0.38), 0 36px 90px rgba(0, 0, 0, 0.29);
}
.message {
  display: flex;
  flex-direction: column;
  margin: 0;
  line-height: 32px;
  white-space: nowrap;
}
.choices {
  display: flex;
  flex-direction: column;
  margin-top: 47px;
  padding-left: 4px;
  letter-spacing: 0.21px;
}
.choice {
  display: flex;
  align-items: center;
  gap: 12px;
  height: 36px;
  line-height: 36px;
  white-space: nowrap;
}
.choice span {
  padding-top: 2px;
}
.choice input {
  appearance: none;
  flex: none;
  width: 28px;
  height: 28px;
  margin: 0;
  border-radius: 50%;
  background: #fff;
  box-shadow: inset 0 0 1px 1px #bdbdbd, inset 0 2px 4px rgba(0, 0, 0, 0.12);
}
.choice input:checked {
  background: radial-gradient(circle at center, #fff 5.7px, transparent 6.5px), linear-gradient(#4690f7, #3174f2);
  box-shadow: 0 0 0 5.7px #98b5f5;
}
.actions {
  display: flex;
  justify-content: flex-end;
  gap: 24px;
  margin-top: auto;
}
button {
  box-sizing: border-box;
  height: 40px;
  padding: 0 0 2px;
  border: 0;
  border-radius: 10px;
  font: inherit;
  letter-spacing: 0.3px;
}
.cancel {
  width: 124px;
  background: #fff;
  color: #262626;
  box-shadow: 0 0 0 1px rgba(0, 0, 0, 0.09), 0 1px 2px rgba(0, 0, 0, 0.3);
}
.install {
  width: 112px;
  background: linear-gradient(#4a90f8, #3175f5);
  color: #fff;
  box-shadow: 0 1px 3px rgba(49, 117, 245, 0.35);
}
</style>
